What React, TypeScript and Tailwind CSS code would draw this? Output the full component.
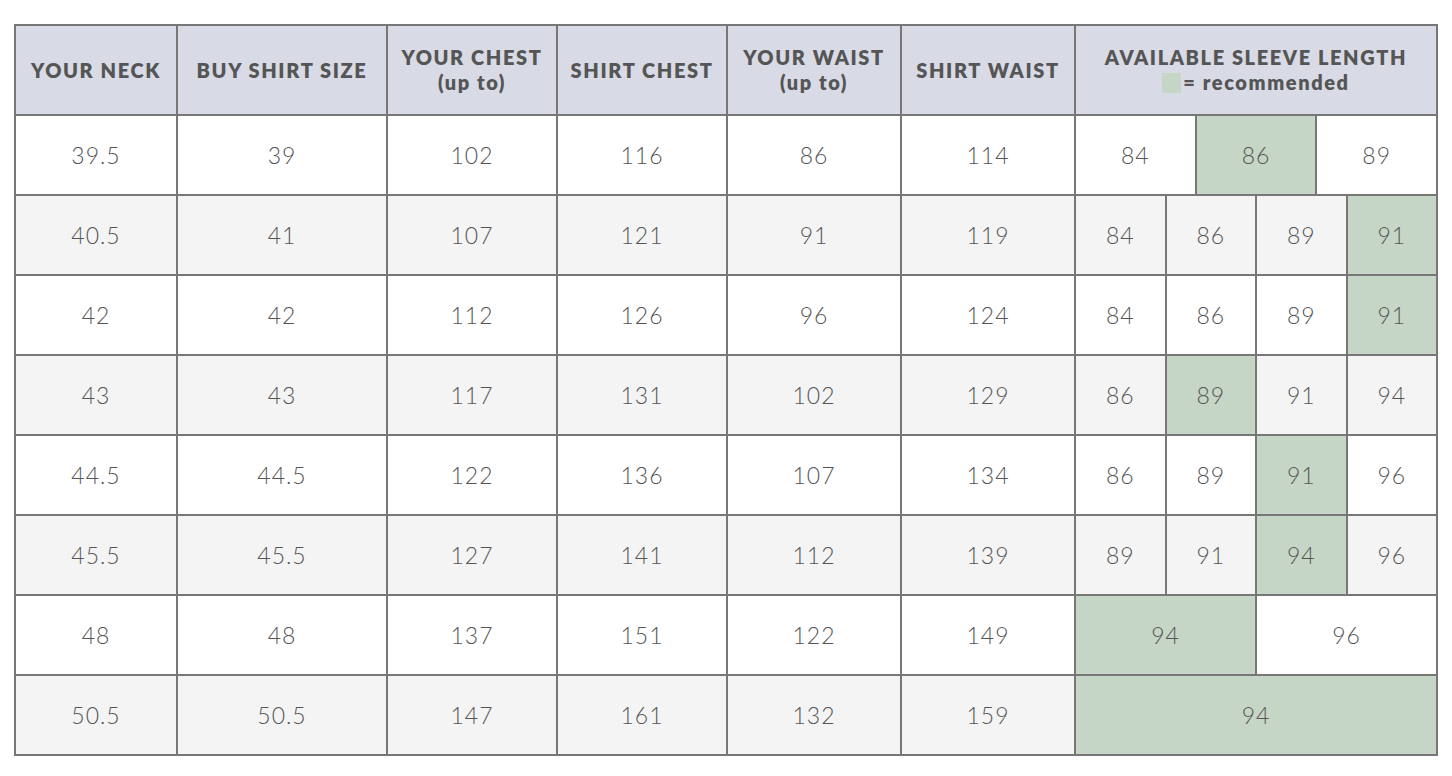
import React from 'react'

type Sleeve = { v: string; rec?: boolean }
type Row = { cells: string[]; sleeves: Sleeve[] }

const rows: Row[] = [
  { cells: ['39.5', '39', '102', '116', '86', '114'], sleeves: [{ v: '84' }, { v: '86', rec: true }, { v: '89' }] },
  { cells: ['40.5', '41', '107', '121', '91', '119'], sleeves: [{ v: '84' }, { v: '86' }, { v: '89' }, { v: '91', rec: true }] },
  { cells: ['42', '42', '112', '126', '96', '124'], sleeves: [{ v: '84' }, { v: '86' }, { v: '89' }, { v: '91', rec: true }] },
  { cells: ['43', '43', '117', '131', '102', '129'], sleeves: [{ v: '86' }, { v: '89', rec: true }, { v: '91' }, { v: '94' }] },
  { cells: ['44.5', '44.5', '122', '136', '107', '134'], sleeves: [{ v: '86' }, { v: '89' }, { v: '91', rec: true }, { v: '96' }] },
  { cells: ['45.5', '45.5', '127', '141', '112', '139'], sleeves: [{ v: '89' }, { v: '91' }, { v: '94', rec: true }, { v: '96' }] },
  { cells: ['48', '48', '137', '151', '122', '149'], sleeves: [{ v: '94', rec: true }, { v: '96' }] },
  { cells: ['50.5', '50.5', '147', '161', '132', '159'], sleeves: [{ v: '94', rec: true }] },
]

const headers: [string, string?][] = [
  ['YOUR NECK'],
  ['BUY SHIRT SIZE'],
  ['YOUR CHEST', '(up to)'],
  ['SHIRT CHEST'],
  ['YOUR WAIST', '(up to)'],
  ['SHIRT WAIST'],
]

export default function App() {
  return (
    <div className="min-h-screen bg-white pl-[14px] pt-[24px]" style={{ fontFamily: 'Lato, "Open Sans", sans-serif' }}>
      <div className="grid w-[1424px] grid-cols-[162px_210px_170px_170px_174px_174px_362px] border-l-2 border-t-2 border-[#777] text-[#555]">
        {headers.map(([a, b]) => (
          <div
            key={a}
            className="flex h-[90px] flex-col items-center justify-center border-b-2 border-r-2 border-[#777] bg-[#d8dbe6] text-center text-[20px] font-extrabold leading-[25px] tracking-[1.6px]"
          >
            <span>{a}</span>
            {b && <span>{b}</span>}
          </div>
        ))}
        <div className="flex h-[90px] flex-col items-center justify-center border-b-2 border-r-2 border-[#777] bg-[#d8dbe6] text-center text-[20px] font-extrabold leading-[25px] tracking-[1.6px]">
          <span>AVAILABLE SLEEVE LENGTH</span>
          <span className="flex items-center">
            <span className="mr-[2px] inline-block h-[20px] w-[19px] bg-[#c5d5c6]" />
            = recommended
          </span>
        </div>

        {rows.map((row, i) => {
          const bg = i % 2 === 1 ? 'bg-[#f4f4f4]' : 'bg-white'
          return (
            <React.Fragment key={i}>
              {row.cells.map((c, j) => (
                <div
                  key={j}
                  className={`flex h-[80px] items-center justify-center border-b-2 border-r-2 border-[#777] text-[23px] font-light tracking-[1px] ${bg}`}
                >
                  {c}
                </div>
              ))}
              <div className="flex h-[80px] border-b-2 border-r-2 border-[#777]">
                {row.sleeves.map((s, k) => (
                  <div
                    key={k}
                    className={`flex flex-1 items-center justify-center text-[23px] font-light tracking-[1px] ${
                      k < row.sleeves.length - 1 ? 'border-r-2 border-[#777]' : ''
                    } ${s.rec ? 'bg-[#c5d5c6]' : bg}`}
                  >
                    {s.v}
                  </div>
                ))}
              </div>
            </React.Fragment>
          )
        })}
      </div>
    </div>
  )
}
